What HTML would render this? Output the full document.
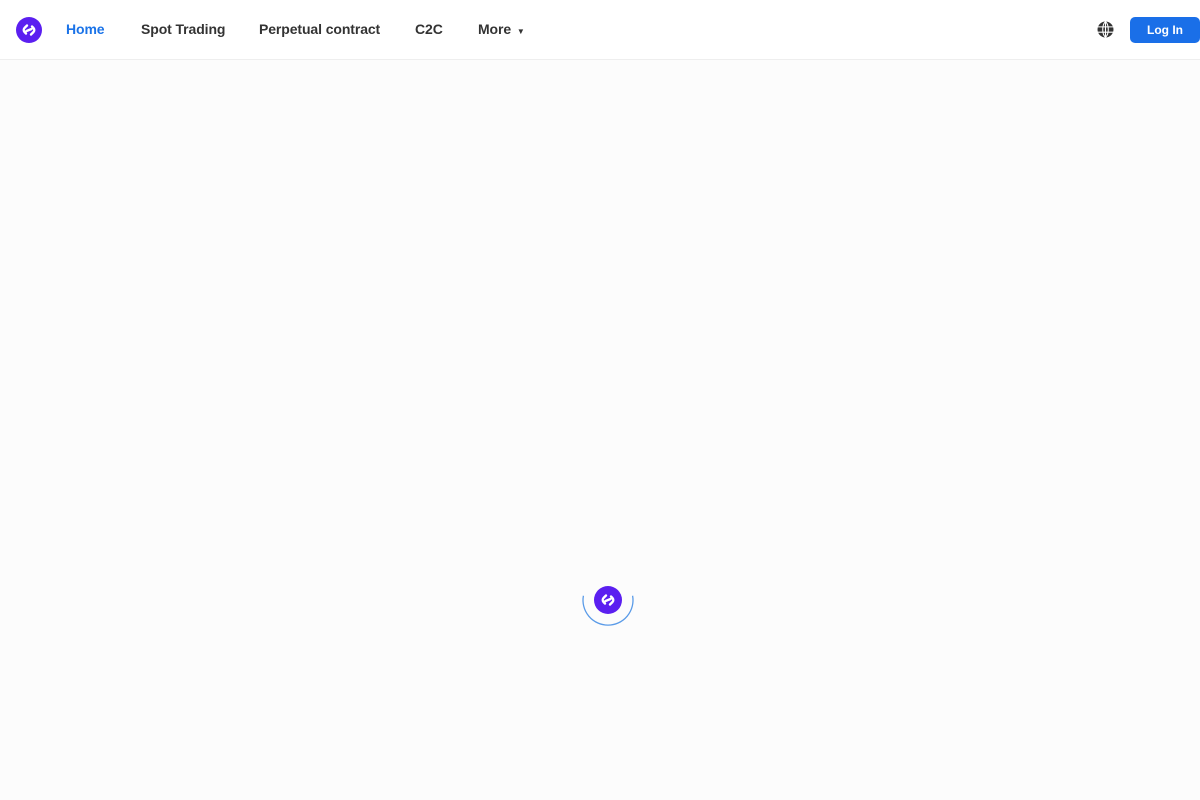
<!DOCTYPE html>
<html><head><meta charset="utf-8"><style>
body{margin:0;width:1200px;height:800px;background:#fcfcfc;font-family:"Liberation Sans",sans-serif;overflow:hidden;position:relative}
.hd{position:absolute;left:0;top:0;width:1200px;height:59px;background:#fff;border-bottom:1px solid #eeeeee}
.nav{position:absolute;top:21px;font-size:14px;font-weight:bold;color:#333;letter-spacing:-0.1px;line-height:17px}
.btn{position:absolute;left:1130px;top:17px;width:70px;height:26px;background:#1a6fe8;border-radius:5px;color:#fff;font-size:12px;font-weight:bold;text-align:center;line-height:26px}
</style></head><body>
<div class="hd">
<svg style="position:absolute;left:16px;top:17px" width="26" height="26" viewBox="0 0 26 26"><circle cx="13" cy="13" r="13" fill="#5b1ff0"/><path d="M11 8.5 L8.5 11 a3 3 0 0 0 0 4 l1.5 1.5 M15 17.5 L17.5 15 a3 3 0 0 0 0 -4 l-1.5 -1.5 M10.5 14 L15.5 12" stroke="#fff" stroke-width="2.4" fill="none" stroke-linecap="round"/></svg>
<div class="nav" style="left:66px;color:#1a73e8">Home</div>
<div class="nav" style="left:141px">Spot Trading</div>
<div class="nav" style="left:259px">Perpetual contract</div>
<div class="nav" style="left:415px">C2C</div>
<div class="nav" style="left:478px">More <span style="font-size:8px;margin-left:2px">▼</span></div>
<svg style="position:absolute;left:1097px;top:21px" width="17" height="17" viewBox="0 0 16 16"><circle cx="8" cy="8" r="7.5" fill="#333"/><path d="M0.5 5.5H15.5M0.5 10.5H15.5M8 0.5V15.5M8 0.5C4.5 4 4.5 12 8 15.5M8 0.5C11.5 4 11.5 12 8 15.5" stroke="#fff" stroke-width="1" fill="none"/></svg>
<div class="btn">Log In</div>
</div>
<svg style="position:absolute;left:578px;top:570px" width="60" height="60" viewBox="0 0 60 60">
<path d="M5.4 25.7 A25 25 0 1 0 54.6 25.7" stroke="#5a9be8" stroke-width="1.3" fill="none"/>
<circle cx="30" cy="30" r="14" fill="#5b1ff0"/>
<path d="M28 25.5 L25.5 28 a3 3 0 0 0 0 4 l1.5 1.5 M32 34.5 L34.5 32 a3 3 0 0 0 0 -4 l-1.5 -1.5 M27.5 31 L32.5 29" stroke="#fff" stroke-width="2.4" fill="none" stroke-linecap="round"/>
</svg>
</body></html>
